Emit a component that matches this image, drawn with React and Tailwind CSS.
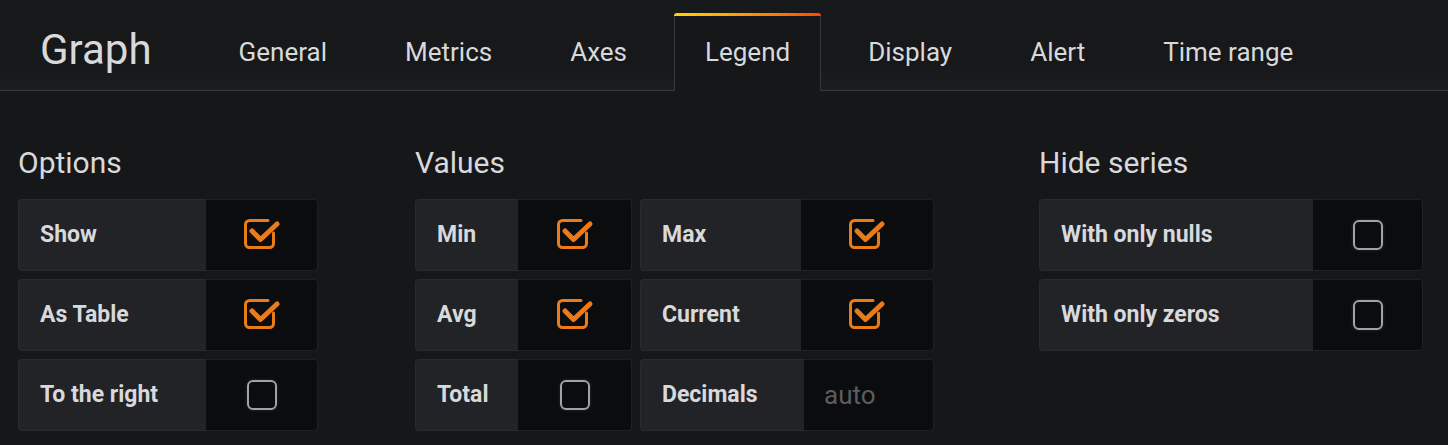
import React from "react";

const tabs = ["General", "Metrics", "Axes", "Legend", "Display", "Alert", "Time range"];

const Checked = () => (
  <svg width="40" height="36" viewBox="0 0 40 36" fill="none">
    <path
      d="M26 3.5H7.5A4 4 0 0 0 3.5 7.5V26.5A4 4 0 0 0 7.5 30.5H27.5A4 4 0 0 0 31.5 26.5V16"
      stroke="#eb7b18"
      strokeWidth="3"
      strokeLinecap="round"
    />
    <path
      d="M10 14L18.5 22.5L35 7"
      stroke="#eb7b18"
      strokeWidth="5"
      strokeLinecap="round"
      strokeLinejoin="round"
    />
  </svg>
);

const Unchecked = () => (
  <div className="h-[30px] w-[30px] rounded-[6px] border-[2.5px] border-[#a3a3a5] shadow-[0_0_4px_rgba(255,255,255,0.12)]" />
);

const Row = ({ label, labelW, boxW, checked, input }) => (
  <div className="flex h-[72px]">
    <div
      className="flex items-center rounded-l-[4px] border border-r-0 border-[#2a2b2f] bg-[#222327] pl-[21px] text-[23px] font-bold text-[#d8d9da]"
      style={{ width: labelW }}
    >
      {label}
    </div>
    {input ? (
      <div
        className="flex items-center rounded-r-[4px] border border-l-0 border-[#1f2023] bg-[#0b0c0e] pl-[20px] text-[26px] text-[#5c5d60]"
        style={{ width: boxW }}
      >
        {input}
      </div>
    ) : (
      <div
        className="flex items-center justify-center rounded-r-[4px] border border-l-0 border-[#1f2023] bg-[#0b0c0e]"
        style={{ width: boxW }}
      >
        {checked ? <Checked /> : <Unchecked />}
      </div>
    )}
  </div>
);

const Heading = ({ children }) => (
  <h2 className="mb-[21px] text-[30px] leading-none text-[#d8d9da]">{children}</h2>
);

export default function App() {
  return (
    <div
      className="h-[445px] w-[1448px] overflow-hidden bg-[#161719]"
      style={{ fontFamily: "Roboto, 'Liberation Sans', sans-serif" }}
    >
      {/* header */}
      <div className="flex h-[91px] border-b border-[#38393c] bg-gradient-to-b from-[#17181a] from-70% to-[#1c1d20] pt-[13px]">
        <div className="mr-[56px] flex h-[78px] items-center pb-[4px] pl-[40px] text-[42px] leading-none text-[#d8d9da]">
          Graph
        </div>
        <div className="flex gap-[16px]">
          {tabs.map((t) =>
            t === "Legend" ? (
              <div
                key={t}
                className="relative -mb-px flex h-[78px] items-center rounded-t-[4px] border-x border-[#38393c] bg-[#161719] px-[30px] text-[26px] leading-none text-[#d8d9da]"
              >
                <span className="absolute -left-px -right-px top-0 h-[3px] rounded-t-[3px] bg-gradient-to-r from-[#ffd500] to-[#ff4400]" />
                {t}
              </div>
            ) : (
              <div
                key={t}
                className="flex h-[78px] items-center px-[31px] text-[26px] leading-none text-[#d8d9da]"
              >
                {t}
              </div>
            )
          )}
        </div>
      </div>

      {/* body */}
      <div className="flex pt-[57px]">
        <div className="w-[415px] pl-[18px]">
          <Heading>Options</Heading>
          <div className="flex flex-col gap-[8px]">
            <Row label="Show" labelW={188} boxW={112} checked />
            <Row label="As Table" labelW={188} boxW={112} checked />
            <Row label="To the right" labelW={188} boxW={112} />
          </div>
        </div>

        <div className="w-[624px]">
          <Heading>Values</Heading>
          <div className="flex gap-[8px]">
            <div className="flex flex-col gap-[8px]">
              <Row label="Min" labelW={103} boxW={114} checked />
              <Row label="Avg" labelW={103} boxW={114} checked />
              <Row label="Total" labelW={103} boxW={114} />
            </div>
            <div className="flex flex-col gap-[8px]">
              <Row label="Max" labelW={161} boxW={133} checked />
              <Row label="Current" labelW={161} boxW={133} checked />
              <Row label="Decimals" labelW={164} boxW={130} input="auto" />
            </div>
          </div>
        </div>

        <div>
          <Heading>Hide series</Heading>
          <div className="flex flex-col gap-[8px]">
            <Row label="With only nulls" labelW={274} boxW={110} />
            <Row label="With only zeros" labelW={274} boxW={110} />
          </div>
        </div>
      </div>
    </div>
  );
}
